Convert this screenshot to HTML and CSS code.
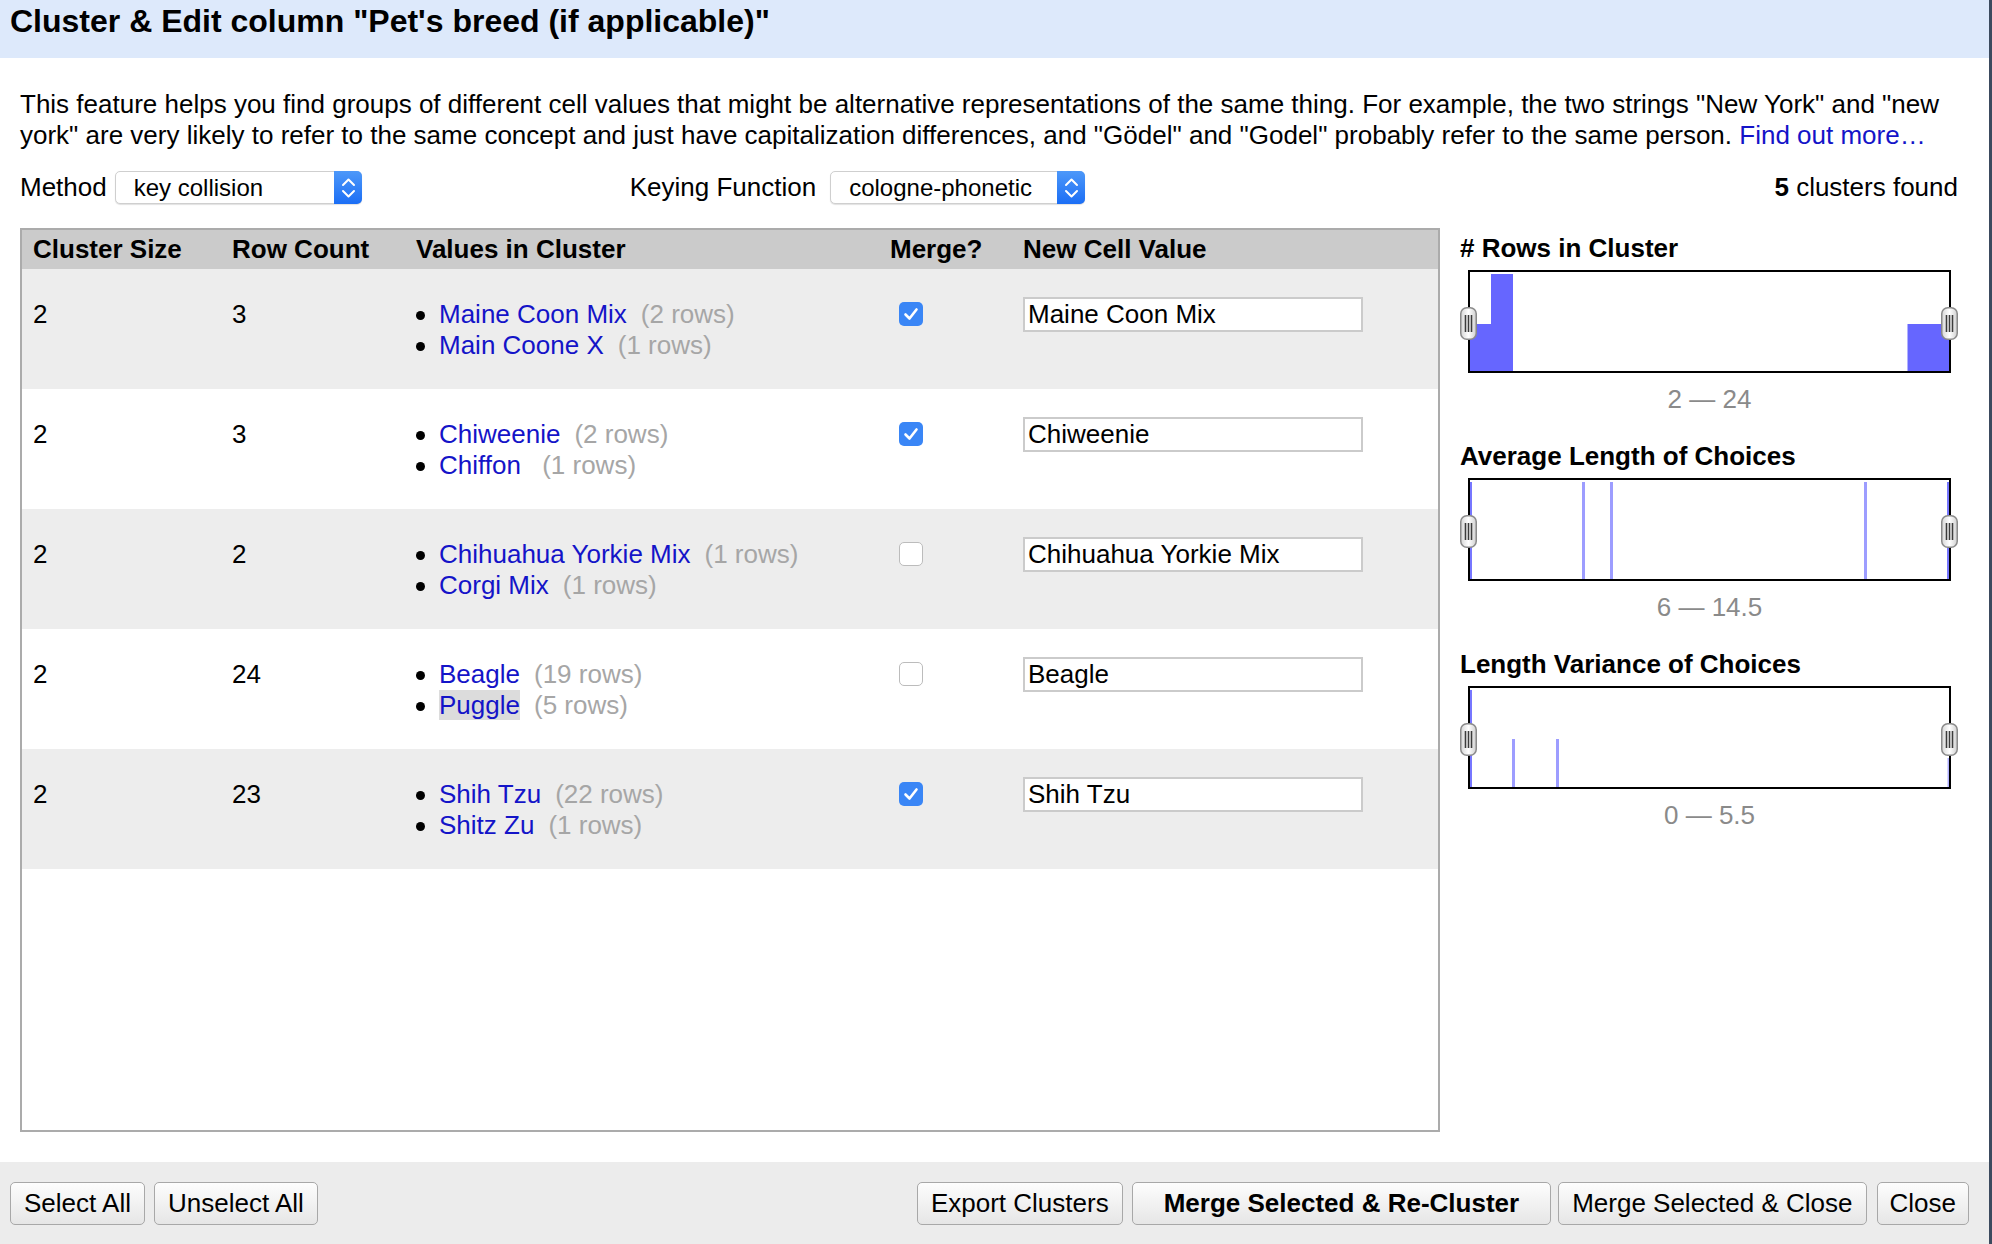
FILE: index.html
```html
<!DOCTYPE html>
<html>
<head>
<meta charset="utf-8">
<title>Cluster &amp; Edit</title>
<link rel="stylesheet" href="styles.css">
</head>
<body>
<div class="dialog">
  <div class="titlebar">Cluster &amp; Edit column "Pet's breed (if applicable)"</div>
  <div class="content">
    <p class="desc">This feature helps you find groups of different cell values that might be alternative representations of the same thing. For example, the two strings "New York" and "new york" are very likely to refer to the same concept and just have capitalization differences, and "Gödel" and "Godel" probably refer to the same person. <a class="link" href="#">Find out more…</a></p>
    <div class="controls">
      <span class="ctl-label">Method</span>
      <div class="select sel-method">
        <span class="sel-text">key collision</span>
        <span class="stepper"><svg width="28" height="33" viewBox="0 0 28 33"><polyline points="9,14 14.5,8.5 20,14" fill="none" stroke="#fff" stroke-width="2" stroke-linecap="round" stroke-linejoin="round"/><polyline points="9,20 14.5,25.5 20,20" fill="none" stroke="#fff" stroke-width="2" stroke-linecap="round" stroke-linejoin="round"/></svg></span>
      </div>
      <span class="ctl-label ctl-key">Keying Function</span>
      <div class="select sel-key">
        <span class="sel-text">cologne-phonetic</span>
        <span class="stepper"><svg width="28" height="33" viewBox="0 0 28 33"><polyline points="9,14 14.5,8.5 20,14" fill="none" stroke="#fff" stroke-width="2" stroke-linecap="round" stroke-linejoin="round"/><polyline points="9,20 14.5,25.5 20,20" fill="none" stroke="#fff" stroke-width="2" stroke-linecap="round" stroke-linejoin="round"/></svg></span>
      </div>
      <div class="found"><b>5</b> clusters found</div>
    </div>
    <div class="main">
      <div class="table">
        <div class="row thead">
          <div class="cell">Cluster Size</div>
          <div class="cell">Row Count</div>
          <div class="cell">Values in Cluster</div>
          <div class="cell">Merge?</div>
          <div class="cell">New Cell Value</div>
        </div>
        <div class="row trow odd">
          <div class="cell">2</div>
          <div class="cell">3</div>
          <div class="cell vals">
            <div class="val"><span class="dot"></span><a class="link" href="#">Maine Coon Mix</a><span class="count">(2 rows)</span></div>
            <div class="val"><span class="dot"></span><a class="link" href="#">Main Coone X</a><span class="count">(1 rows)</span></div>
          </div>
          <div class="cell cbcell"><span class="cb checked"><svg width="24" height="24" viewBox="0 0 24 24"><polyline points="6.5,12.5 10.5,16.5 17.5,7.5" fill="none" stroke="#fff" stroke-width="2.6" stroke-linecap="round" stroke-linejoin="round"/></svg></span></div>
          <div class="cell incell"><div class="input">Maine Coon Mix</div></div>
        </div>
        <div class="row trow">
          <div class="cell">2</div>
          <div class="cell">3</div>
          <div class="cell vals">
            <div class="val"><span class="dot"></span><a class="link" href="#">Chiweenie</a><span class="count">(2 rows)</span></div>
            <div class="val"><span class="dot"></span><a class="link" href="#">Chiffon</a>&nbsp;<span class="count">(1 rows)</span></div>
          </div>
          <div class="cell cbcell"><span class="cb checked"><svg width="24" height="24" viewBox="0 0 24 24"><polyline points="6.5,12.5 10.5,16.5 17.5,7.5" fill="none" stroke="#fff" stroke-width="2.6" stroke-linecap="round" stroke-linejoin="round"/></svg></span></div>
          <div class="cell incell"><div class="input">Chiweenie</div></div>
        </div>
        <div class="row trow odd">
          <div class="cell">2</div>
          <div class="cell">2</div>
          <div class="cell vals">
            <div class="val"><span class="dot"></span><a class="link" href="#">Chihuahua Yorkie Mix</a><span class="count">(1 rows)</span></div>
            <div class="val"><span class="dot"></span><a class="link" href="#">Corgi Mix</a><span class="count">(1 rows)</span></div>
          </div>
          <div class="cell cbcell"><span class="cb"></span></div>
          <div class="cell incell"><div class="input">Chihuahua Yorkie Mix</div></div>
        </div>
        <div class="row trow">
          <div class="cell">2</div>
          <div class="cell">24</div>
          <div class="cell vals">
            <div class="val"><span class="dot"></span><a class="link" href="#">Beagle</a><span class="count">(19 rows)</span></div>
            <div class="val"><span class="dot"></span><a class="link hl" href="#">Puggle</a><span class="count">(5 rows)</span></div>
          </div>
          <div class="cell cbcell"><span class="cb"></span></div>
          <div class="cell incell"><div class="input">Beagle</div></div>
        </div>
        <div class="row trow odd">
          <div class="cell">2</div>
          <div class="cell">23</div>
          <div class="cell vals">
            <div class="val"><span class="dot"></span><a class="link" href="#">Shih Tzu</a><span class="count">(22 rows)</span></div>
            <div class="val"><span class="dot"></span><a class="link" href="#">Shitz Zu</a><span class="count">(1 rows)</span></div>
          </div>
          <div class="cell cbcell"><span class="cb checked"><svg width="24" height="24" viewBox="0 0 24 24"><polyline points="6.5,12.5 10.5,16.5 17.5,7.5" fill="none" stroke="#fff" stroke-width="2.6" stroke-linecap="round" stroke-linejoin="round"/></svg></span></div>
          <div class="cell incell"><div class="input">Shih Tzu</div></div>
        </div>
      </div>
      <div class="facets">
        <div class="facet">
          <div class="facet-title"># Rows in Cluster</div>
          <div class="hist">
            <svg width="479" height="99" viewBox="0 0 479 99">
              <rect x="0" y="52" width="21" height="47" fill="#6666ff"/>
              <rect x="21" y="2" width="22" height="97" fill="#6666ff"/>
              <rect x="437.5" y="52" width="41.5" height="47" fill="#6666ff"/>
            </svg>
            <span class="handle h-left"><svg width="17" height="33" viewBox="0 0 17 33"><defs><linearGradient id="hg1" x1="0" y1="0" x2="1" y2="0"><stop offset="0" stop-color="#d6d6d6"/><stop offset="0.5" stop-color="#ffffff"/><stop offset="1" stop-color="#cfcfcf"/></linearGradient></defs><rect x="0.75" y="0.75" width="15.5" height="31.5" rx="6" fill="url(#hg1)" stroke="#8a8a8a" stroke-width="1.5"/><path d="M5.5 8v17M8.5 8v17M11.5 8v17" stroke="#3c3c3c" stroke-width="1.6"/></svg></span>
            <span class="handle h-right"><svg width="17" height="33" viewBox="0 0 17 33"><rect x="0.75" y="0.75" width="15.5" height="31.5" rx="6" fill="url(#hg1)" stroke="#8a8a8a" stroke-width="1.5"/><path d="M5.5 8v17M8.5 8v17M11.5 8v17" stroke="#3c3c3c" stroke-width="1.6"/></svg></span>
          </div>
          <div class="range">2 — 24</div>
        </div>
        <div class="facet">
          <div class="facet-title">Average Length of Choices</div>
          <div class="hist">
            <svg width="479" height="99" viewBox="0 0 479 99">
              <rect x="0" y="2" width="2" height="97" fill="#7777ff"/>
              <rect x="112" y="2" width="3" height="97" fill="#9d9dff"/>
              <rect x="140" y="2" width="3" height="97" fill="#9d9dff"/>
              <rect x="394" y="2" width="3" height="97" fill="#9d9dff"/>
              <rect x="477" y="2" width="2" height="97" fill="#7777ff"/>
            </svg>
            <span class="handle h-left"><svg width="17" height="33" viewBox="0 0 17 33"><rect x="0.75" y="0.75" width="15.5" height="31.5" rx="6" fill="url(#hg1)" stroke="#8a8a8a" stroke-width="1.5"/><path d="M5.5 8v17M8.5 8v17M11.5 8v17" stroke="#3c3c3c" stroke-width="1.6"/></svg></span>
            <span class="handle h-right"><svg width="17" height="33" viewBox="0 0 17 33"><rect x="0.75" y="0.75" width="15.5" height="31.5" rx="6" fill="url(#hg1)" stroke="#8a8a8a" stroke-width="1.5"/><path d="M5.5 8v17M8.5 8v17M11.5 8v17" stroke="#3c3c3c" stroke-width="1.6"/></svg></span>
          </div>
          <div class="range">6 — 14.5</div>
        </div>
        <div class="facet">
          <div class="facet-title">Length Variance of Choices</div>
          <div class="hist">
            <svg width="479" height="99" viewBox="0 0 479 99">
              <rect x="0" y="2" width="2" height="97" fill="#7777ff"/>
              <rect x="42" y="51" width="3" height="48" fill="#9d9dff"/>
              <rect x="86" y="51" width="3" height="48" fill="#9d9dff"/>
              <rect x="477.5" y="70" width="1.5" height="29" fill="#b0b0ff"/>
            </svg>
            <span class="handle h-left"><svg width="17" height="33" viewBox="0 0 17 33"><rect x="0.75" y="0.75" width="15.5" height="31.5" rx="6" fill="url(#hg1)" stroke="#8a8a8a" stroke-width="1.5"/><path d="M5.5 8v17M8.5 8v17M11.5 8v17" stroke="#3c3c3c" stroke-width="1.6"/></svg></span>
            <span class="handle h-right"><svg width="17" height="33" viewBox="0 0 17 33"><rect x="0.75" y="0.75" width="15.5" height="31.5" rx="6" fill="url(#hg1)" stroke="#8a8a8a" stroke-width="1.5"/><path d="M5.5 8v17M8.5 8v17M11.5 8v17" stroke="#3c3c3c" stroke-width="1.6"/></svg></span>
          </div>
          <div class="range">0 — 5.5</div>
        </div>
      </div>
    </div>
  </div>
  <div class="footer">
    <button class="btn">Select All</button>
    <button class="btn">Unselect All</button>
    <span class="spacer"></span>
    <button class="btn">Export Clusters</button>
    <button class="btn btn-primary">Merge Selected &amp; Re-Cluster</button>
    <button class="btn btn-after-primary">Merge Selected &amp; Close</button>
    <button class="btn btn-last">Close</button>
  </div>
</div>
</body>
</html>
```

FILE: styles.css
```css
* {
  box-sizing: border-box;
}

html,
body {
  margin: 0;
  padding: 0;
}

body {
  font-family: "Liberation Sans", Arial, Helvetica, sans-serif;
  font-size: 26px;
  line-height: 31px;
  color: #000;
  background: #fff;
}

.dialog {
  width: 1992px;
  height: 1244px;
  display: flex;
  flex-direction: column;
  border-right: 3px solid #3b4a5e;
  overflow: hidden;
}

.titlebar {
  flex: none;
  height: 58px;
  background: #dde9fb;
  font-size: 32px;
  font-weight: bold;
  line-height: 38px;
  padding: 2px 0 0 10px;
  white-space: nowrap;
}

.content {
  flex: 1;
  display: flex;
  flex-direction: column;
  padding: 0 31px 30px 20px;
  min-height: 0;
}

.desc {
  margin: 31px 0 0;
}

.link {
  color: #1414c8;
  text-decoration: none;
}

.controls {
  display: flex;
  align-items: center;
  height: 33px;
  margin-top: 20px;
  white-space: nowrap;
}

.select {
  display: flex;
  align-items: center;
  height: 33px;
  background: #fff;
  border: 1px solid #cfcfcf;
  border-radius: 5px;
  box-shadow: 0 1px 1px rgba(0, 0, 0, 0.12);
  font-size: 24px;
}

.sel-method {
  width: 247px;
  margin-left: 8px;
}

.sel-key {
  width: 255px;
  margin-left: 14px;
}

.ctl-key {
  margin-left: 268px;
}

.sel-text {
  flex: 1;
  padding-left: 18px;
  line-height: 31px;
}

.stepper {
  display: block;
  width: 28px;
  height: 33px;
  margin: -1px -1px -1px 0;
  border-radius: 0 5px 5px 0;
  background: linear-gradient(#4d98f9, #1b6ef5);
}

.stepper svg {
  display: block;
}

.found {
  margin-left: auto;
}

.main {
  flex: 1;
  display: flex;
  margin-top: 24px;
  min-height: 0;
}

.table {
  flex: none;
  width: 1420px;
  border: 2px solid #ababab;
  background: #fff;
}

.row {
  display: grid;
  grid-template-columns: 199px 184px 474px 133px 1fr;
}

.cell {
  padding-left: 11px;
  white-space: nowrap;
}

.thead {
  height: 39px;
  align-items: center;
  background: #cbcbcb;
  font-weight: bold;
}

.trow {
  height: 120px;
  padding-top: 30px;
  align-items: start;
}

.trow.odd {
  background: #ededed;
}

.dot {
  display: inline-block;
  width: 9px;
  height: 9px;
  margin-right: 14px;
  border-radius: 50%;
  background: #000;
  vertical-align: 3.5px;
}

.count {
  margin-left: 14px;
  color: #a6a6a6;
}

.hl {
  background: #dcdcdc;
}

.cbcell {
  padding-left: 20px;
  padding-top: 3px;
}

.cb {
  display: block;
  width: 24px;
  height: 24px;
  border: 1px solid #bcbcbc;
  border-radius: 5px;
  background: #fff;
}

.cb.checked {
  border: none;
  background: #3a86f6;
}

.cb svg {
  display: block;
}

.incell {
  margin-top: -2px;
}

.input {
  width: 340px;
  height: 35px;
  border: 2px solid #cbcbcb;
  background: #fff;
  padding-left: 3px;
  line-height: 31px;
}

.facets {
  flex: 1;
  padding: 5px 0 0 20px;
}

.facet + .facet {
  margin-top: 26px;
}

.facet-title {
  font-weight: bold;
  white-space: nowrap;
}

.hist {
  position: relative;
  width: 483px;
  height: 103px;
  margin: 6px 0 0 8px;
  border: 2px solid #000;
  background: #fff;
}

.hist svg {
  display: block;
}

.handle {
  position: absolute;
  top: 50%;
  width: 17px;
  height: 33px;
  margin-top: -15px;
}

.h-left {
  left: -10.5px;
}

.h-right {
  right: -8.5px;
}

.range {
  width: 483px;
  margin: 11px 0 0 8px;
  text-align: center;
  color: #8a8a8a;
}

.footer {
  flex: none;
  display: flex;
  align-items: flex-start;
  height: 82px;
  padding: 20px 20px 0 10px;
  background: #ececec;
}

.spacer {
  flex: 1;
}

.btn {
  height: 43px;
  margin: 0;
  padding: 0 13px;
  border: 1px solid #a8a8a8;
  border-radius: 5px;
  background: linear-gradient(#fdfdfd, #e6e6e6);
  font-family: "Liberation Sans", Arial, Helvetica, sans-serif;
  font-size: 26px;
  line-height: 31px;
  color: #000;
  white-space: nowrap;
}

.btn + .btn {
  margin-left: 9px;
}

.btn-primary {
  padding: 0 31px;
  font-weight: bold;
}

.btn + .btn-after-primary {
  margin-left: 7px;
}

.btn + .btn-last {
  margin-left: 10px;
  padding: 0 12px;
}
```
